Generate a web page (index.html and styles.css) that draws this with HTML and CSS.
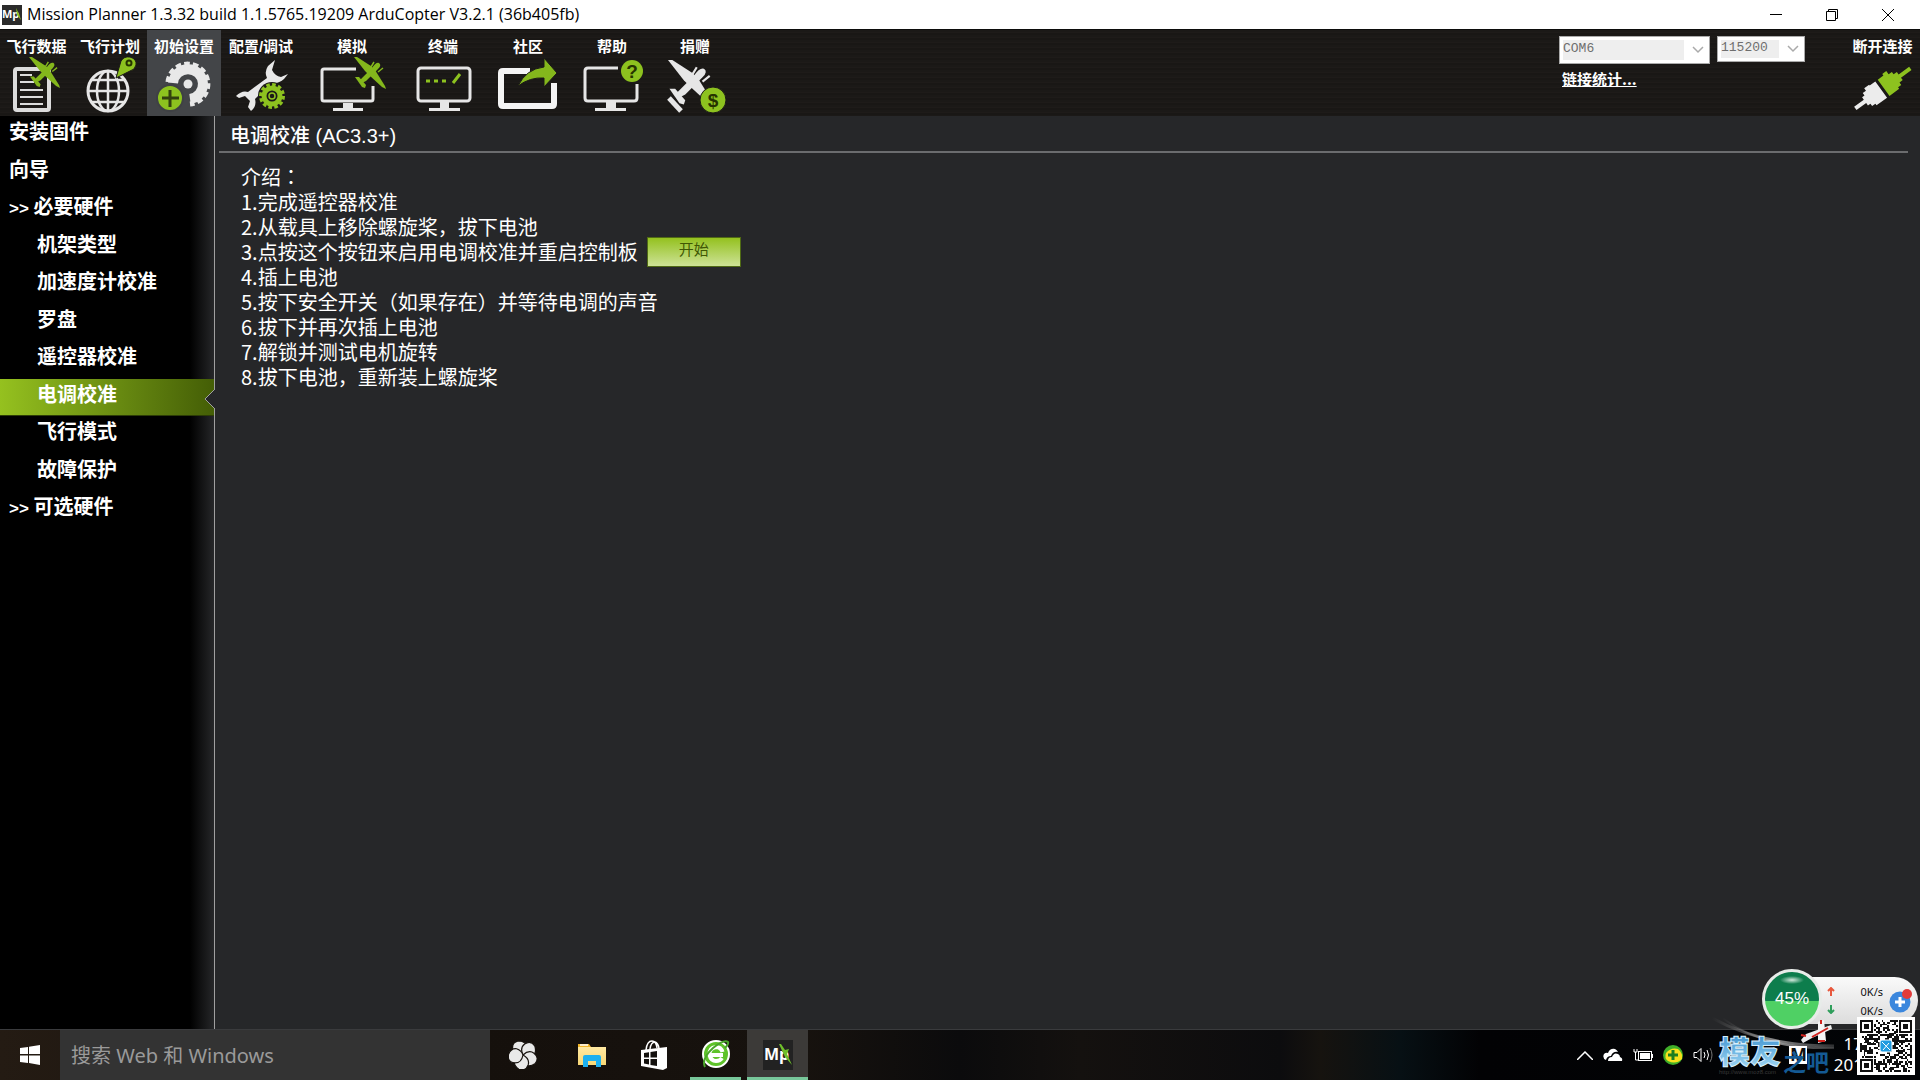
FILE: index.html
```html
<!DOCTYPE html>
<html lang="zh-CN">
<head>
<meta charset="utf-8">
<title>Mission Planner</title>
<link rel="stylesheet" href="styles.css">
</head>
<body>
<svg class="defs" width="0" height="0" aria-hidden="true">
  <defs>
    <symbol id="plane" viewBox="0 0 32 32" overflow="visible">
      <path d="M0 0L3 0L17 9L21 13L31 29L32 32L28 30L15 18L11 14Z"/>
      <path d="M25 6Q28 8 24 12L12 24L8 26L6 23L18 11Q22 5 25 6Z"/>
      <path d="M1 20L5 20L12 28L11 31L8 30Z"/>
      <path d="M17 10L20 5M24 15L29 11" fill="none" stroke="currentColor" stroke-width="1.500"/>
    </symbol>
    <linearGradient id="ink" x1="0" y1="0" x2="0" y2="1"><stop offset="0" stop-color="#2b86c8"/><stop offset="1" stop-color="#a9ddf7"/></linearGradient>
    <linearGradient id="folder" x1="0" y1="0" x2="0" y2="1"><stop offset="0" stop-color="#ffe9a2"/><stop offset="1" stop-color="#f8d775"/></linearGradient>
    <linearGradient id="swoosh"><stop offset="0" stop-color="#888" stop-opacity="0"/><stop offset=".5" stop-color="#aaa" stop-opacity=".8"/><stop offset="1" stop-color="#999" stop-opacity=".3"/></linearGradient>
  </defs>
</svg>

<header class="titlebar">
  <svg class="app-icon" width="20" height="20" viewBox="0 0 20 20"><rect width="20" height="20" fill="#2b2b2b"/><text x="0" y="13" font-size="11" font-weight="bold" fill="#fff">Mp</text><path d="M14 3L17 9L19 15L15 10Z" fill="#8dc21f"/></svg>
  <h1>Mission Planner 1.3.32 build 1.1.5765.19209 ArduCopter V3.2.1 (36b405fb)</h1>
  <div class="window-controls">
    <button aria-label="最小化"><svg width="12" height="12"><path d="M0 5.500H12" stroke="#000"/></svg></button>
    <button aria-label="还原"><svg width="12" height="12" fill="none" stroke="#000"><path d="M.5 2.500H9.500V11.500H.5ZM2.500 2V.5H11.500V9.500H10"/></svg></button>
    <button aria-label="关闭"><svg width="12" height="12"><path d="M0 0L12 12M12 0L0 12" stroke="#000"/></svg></button>
  </div>
</header>

<div class="toolbar">
  <nav class="modes">
    <button><span>飞行数据</span>
      <svg viewBox="0 57 73 59" height="59"><rect x="15" y="69" width="34" height="41" rx="2" fill="none" stroke="#dcdcdc" stroke-width="4"/><path d="M20 75H32M20 82H34M20 90H43M20 97H43M20 104H43" stroke="#dcdcdc" stroke-width="2"/><use href="#plane" x="29" y="57" width="31" height="31" class="leaf"/></svg></button>
    <button><span>飞行计划</span>
      <svg viewBox="73 57 74 59" height="59"><g fill="none" stroke="#e6e6e6" stroke-width="2.500"><circle cx="108" cy="91" r="20" stroke-width="3"/><ellipse cx="108" cy="91" rx="11" ry="20"/><path d="M108 71V111M88 91H128M92 80H124M92 102H124"/></g><path d="M116 78L121 61Q124 56 130 57Q137 59 136 65Q135 70 130 71Z" fill="#8dc21f" stroke="#1b1917"/><circle cx="129" cy="63" r="2.500" fill="#8dc21f" stroke="#263300" stroke-width="2"/></svg></button>
    <button class="selected"><span>初始设置</span>
      <svg viewBox="147 57 74 59" height="59"><g fill="none" stroke="#e8e8e8"><path d="M173 83A15 15 0 1 1 190 99" stroke-width="10"/><path d="M168 82A20 20 0 1 1 190 104" stroke-width="5" stroke-dasharray="5.500 3"/></g><circle cx="188" cy="84" r="4.500" fill="#e8e8e8"/><circle cx="170" cy="98" r="13" fill="#8dc21f" stroke="#3f4144" stroke-width="2"/><path d="M162 98H179M170 90V107" stroke="#33400f" stroke-width="3"/></svg></button>
    <button><span>配置/调试</span>
      <svg viewBox="221 57 80 59" height="59"><path d="M275 60L268 66Q264 72 267 78L248 92Q242 90 236 96L239 98L245 96L250 101L248 107L251 111Q257 106 255 99L271 83Q279 84 284 79L288 74L281 77Q275 76 272 70Z" fill="#e8e8e8"/><circle cx="272" cy="96" r="14" fill="#1b1917"/><circle cx="272" cy="96" r="8" fill="none" stroke="#8dc21f" stroke-width="5"/><circle cx="272" cy="96" r="11.500" fill="none" stroke="#8dc21f" stroke-width="3" stroke-dasharray="3.600 2.400"/><circle cx="272" cy="96" r="3" fill="none" stroke="#8dc21f" stroke-width="1.500"/></svg></button>
    <button><span>模拟</span>
      <svg viewBox="301 57 102 59" height="59"><path d="M356 69H324Q322 69 322 71V99Q322 101 324 101H371Q373 101 373 99V86" fill="none" stroke="#e6e6e6" stroke-width="3"/><path d="M343 103H353V108H363V111H333V108H343Z" fill="#e6e6e6"/><use href="#plane" x="354" y="57" width="32" height="32" class="leaf"/></svg></button>
    <button><span>终端</span>
      <svg viewBox="403 57 80 59" height="59"><rect x="418" y="68" width="52" height="33" rx="3" fill="none" stroke="#e6e6e6" stroke-width="3"/><path d="M440 102H449V108H460V111H429V108H440Z" fill="#e6e6e6"/><path d="M426 81H430M434 81H438M442 81H446M453 83L460 74" stroke="#8dc21f" stroke-width="3"/></svg></button>
    <button><span>社区</span>
      <svg viewBox="483 57 90 59" height="59"><path d="M530 71H503Q501 71 501 73V104Q501 106 503 106H552Q554 106 554 104V83" fill="none" stroke="#f4f4f4" stroke-width="6"/><path d="M518 86Q526 69 544 67V58L557 73L544 87V78Q530 77 518 86Z" fill="#84b71c" stroke="#1b1917"/></svg></button>
    <button><span>帮助</span>
      <svg viewBox="573 57 78 59" height="59"><path d="M618 68H588Q585 68 585 71V98Q585 101 588 101H634Q637 101 637 98V84" fill="none" stroke="#e6e6e6" stroke-width="3"/><path d="M606 102H616V108H626V111H595V108H606Z" fill="#e6e6e6"/><circle cx="632" cy="71" r="11" fill="#8dc21f"/><text x="632" y="78" class="glyph">?</text></svg></button>
    <button><span>捐赠</span>
      <svg viewBox="651 57 88 59" height="59"><use href="#plane" x="668" y="60" width="46" height="46" class="chalk"/><path d="M669 98L681 111" stroke="#e6e6e6" stroke-width="5"/><circle cx="713" cy="100" r="13" fill="#8dc21f" stroke="#1b1917"/><text x="713" y="107" class="glyph">$</text></svg></button>
  </nav>
  <div class="connection">
    <div class="combos">
      <select class="port" aria-label="端口"><option>COM6</option></select>
      <select class="baud" aria-label="波特率"><option>115200</option></select>
    </div>
    <a href="#stats">链接统计...</a>
  </div>
  <button class="disconnect"><span>断开连接</span>
    <svg viewBox="1845 57 75 59" height="59"><g transform="translate(1882 89) rotate(-36)"><path d="M2 -10H9V-12H14V-8H18V-5H22V-2H35V2H22V5H18V8H14V10H2Z" fill="#8dc21f"/><path d="M-1 -10H-8V-11H-14V-8H-18V-5H-21V-2H-33V2H-21V5H-18V8H-14V10H-1Z" fill="#ececec"/></g></svg></button>
</div>

<div class="workspace">
  <nav class="sidebar">
    <ul>
      <li><a href="#firmware">安装固件</a></li>
      <li><a href="#wizard">向导</a></li>
      <li><a href="#required"><span class="chevrons">&gt;&gt;</span> 必要硬件</a></li>
      <li class="child"><a href="#frame">机架类型</a></li>
      <li class="child"><a href="#accel">加速度计校准</a></li>
      <li class="child"><a href="#compass">罗盘</a></li>
      <li class="child"><a href="#radio">遥控器校准</a></li>
      <li class="child current"><a href="#esc" aria-current="page">电调校准</a><svg class="notch" width="11" height="20" viewBox="0 0 11 20"><path d="M11 0L1 10L11 20" fill="#262729" stroke="#a0a0a0"/></svg></li>
      <li class="child"><a href="#modes">飞行模式</a></li>
      <li class="child"><a href="#failsafe">故障保护</a></li>
      <li><a href="#optional"><span class="chevrons">&gt;&gt;</span> 可选硬件</a></li>
    </ul>
  </nav>
  <main>
    <h2>电调校准 (AC3.3+)</h2>
    <div class="steps">
      <p>介绍<span class="centered-colon" lang="zh-TW">：</span></p>
      <p>1.完成遥控器校准</p>
      <p>2.从载具上移除螺旋桨，拔下电池</p>
      <div class="step-action"><p>3.点按这个按钮来启用电调校准并重启控制板</p><button>开始</button></div>
      <p>4.插上电池</p>
      <p>5.按下安全开关（如果存在）并等待电调的声音</p>
      <p>6.拔下并再次插上电池</p>
      <p>7.解锁并测试电机旋转</p>
      <p>8.拔下电池，重新装上螺旋桨</p>
    </div>
  </main>
</div>

<footer class="taskbar">
  <button class="start" aria-label="开始菜单"><svg width="20" height="20" fill="#fff"><path d="M0 3L8 2V9H0ZM9 1.800L20 0V9H9ZM0 10.500H8V18L0 17ZM9 10.500H20V20L9 18Z"/></svg></button>
  <input class="search" type="text" placeholder="搜索 Web 和 Windows" aria-label="搜索">
  <div class="apps">
    <button aria-label="浏览器"><svg width="28" height="28" viewBox="-14 -14 28 28"><circle r="12" fill="#e9e9e9"/><g fill="#e9e9e9" stroke="#17120e" stroke-width="1.200"><path id="petal" d="M0 0Q-8 1 -10 -5Q-12 -12 -5 -14Q3 -14 4 -8Q4 -3 0 0Z"/><use href="#petal" transform="rotate(72)"/><use href="#petal" transform="rotate(144)"/><use href="#petal" transform="rotate(216)"/><use href="#petal" transform="rotate(288)"/></g></svg></button>
    <button aria-label="文件资源管理器"><svg width="28" height="24"><path d="M0 1H11L13 4H27V22H0Z" fill="#f0b52a"/><path d="M0 4H28V22H0Z" fill="url(#folder)"/><path d="M2 2H10" stroke="#fff" stroke-width="1.500"/><path d="M5 24V14Q5 12 7 12H21Q23 12 23 14V24H18V18H10V24Z" fill="#1cb0f0"/></svg></button>
    <button aria-label="应用商店"><svg width="28" height="30"><path d="M6 10Q7 1 12 1Q16 1 17 8M10 9Q11 2 15 2Q18 3 19 8" fill="none" stroke="#fff" stroke-width="1.500"/><path d="M1 10L27 7V28L23 30L1 26Z" fill="#fff"/><path d="M4 13L9 12.300V17.500H4ZM10.500 12L17 11V17.500H10.500ZM4 19H9V24.500L4 23.500ZM10.500 19H17V26L10.500 25Z" fill="#14110e"/></svg></button>
    <button class="running" aria-label="安全浏览器"><svg width="28" height="30"><circle cx="14" cy="14" r="13" fill="#5fc32a" stroke="#fff" stroke-width="2"/><path d="M21 15H8M20.500 12Q19 7 14 7Q7 8 7.500 15Q9 21 14 21Q18 21 20 18" fill="none" stroke="#fff" stroke-width="4"/><path d="M3 27Q-1 19 11 8Q22 -1 26 2Q27 4 23 8" fill="none" stroke="#4aa62a" stroke-width="2"/></svg></button>
    <button class="running active" aria-label="Mission Planner"><svg width="30" height="30"><rect width="30" height="30" fill="#222"/><text x="1" y="20" font-size="16" font-weight="bold" fill="#fff">Mp</text><path d="M16 4L18 4L22 10L26 9L24 14L29 25L22 17Z" fill="#6fbf2b"/></svg></button>
  </div>
  <div class="tray">
    <svg width="16" height="9" fill="none" stroke="#fff" stroke-width="1.500"><path d="M0 9L8 1L16 9"/></svg>
    <svg width="20" height="14" fill="#fff"><path d="M3 12Q-1 10 1 6Q3 4 5 5Q7 0 12 1Q14 2 15 4Q10 3 8 8Q4 8 3 12Z"/><path d="M5 13Q5 9 9 9Q11 4 15 6Q17 7 17 9Q20 10 19 13Z"/></svg>
    <svg width="20" height="14" fill="none" stroke="#fff"><rect x="5.500" y="3.500" width="13" height="9"/><rect x="7" y="5" width="10" height="6" fill="#fff" stroke="none"/><path d="M19.500 6V10M1 1V4H4V1M2.500 4V12H5"/></svg>
    <svg width="20" height="20"><circle cx="10" cy="10" r="10" fill="#3fae29"/><path d="M3 8Q8 2 15 4Q20 8 19 14Q13 20 5 16Q1 13 3 8Z" fill="#f6e01c"/><path d="M10 5V15M5 10H15" stroke="#1c7d21" stroke-width="3"/></svg>
    <svg width="20" height="16" fill="none" stroke="#fff"><path d="M1 5.500H4L8 1.500V14.500L4 10.500H1Z"/><path d="M11 5Q13 8 11 11M14 3Q17 8 14 13"/><path d="M17 1Q21 8 17 15" stroke="#777"/></svg>
  </div>
  <div class="clock"><span>17</span><span>201</span></div>
</footer>

<aside class="speed">
  <div class="pill">
    <svg width="8" height="27" fill="none" stroke-width="2"><path d="M4 9V2M1 4L4 1L7 4" stroke="#e8573c"/><path d="M4 18V25M1 23L4 26L7 23" stroke="#2f9e5b"/></svg>
    <div class="rates"><span>0K/s</span><span>0K/s</span></div>
    <svg width="23" height="24"><circle cx="11" cy="13" r="10.500" fill="#3b87dd"/><path d="M6 13H16M11 8V18" stroke="#fff" stroke-width="3"/><circle cx="18" cy="5" r="5" fill="#e23b3b"/></svg>
  </div>
  <div class="gauge">45%</div>
</aside>

<svg class="watermark" width="220" height="70" viewBox="1700 1010 220 70">
  <g fill="none" stroke="url(#swoosh)"><path d="M1712 1018Q1762 1046 1834 1046" stroke-width="3"/><path d="M1722 1018Q1765 1050 1834 1048" stroke-width="2"/></g>
  <rect x="1789" y="1046" width="18" height="18" fill="#fff"/><text x="1790" y="1061" font-size="18" font-weight="bold" fill="#111">M</text>
  <text x="1719" y="1063" class="brand">模友</text>
  <text x="1783" y="1071" class="brand-tail">之吧</text>
  <text x="1719" y="1074" class="brand-url">http://www.moz8.com</text>
  <path d="M1801 1040L1806 1034L1831 1025L1832 1029L1812 1038L1803 1043Z" fill="#eee"/><path d="M1818 1022L1824 1020L1826 1041L1818 1043Z" fill="#f4f4f4"/><path d="M1801 1035L1806 1036M1812 1037L1828 1028M1821 1020V1024M1818 1041H1825" stroke="#d2231e" stroke-width="2"/>
  <rect x="1857" y="1017" width="58" height="58" fill="#fff"/>
  <path id="qr" fill="#111" shape-rendering="crispEdges"/>
  <rect x="1880" y="1040" width="12" height="12" rx="2" fill="#1f9be0" stroke="#fff"/><path d="M1882 1042L1890 1050M1883 1050L1889 1043" stroke="#fff"/>
</svg>
<script src="qr.js"></script>
</body>
</html>
```
FILE: styles.css
```css
* { box-sizing: border-box; }
body {
  margin: 0;
  min-height: 100vh;
  display: flex;
  flex-direction: column;
  position: relative;
  background: #262729;
  color: #fff;
  font-family: "Open Sans", "Noto Sans CJK SC", sans-serif;
}
button { border: 0; padding: 0; margin: 0; background: none; color: inherit; font: inherit; }
h1, h2, p, ul { margin: 0; padding: 0; font-weight: normal; }
a { color: inherit; text-decoration: none; }
svg { display: block; }
.defs { position: absolute; }

.titlebar { display: flex; align-items: center; height: 29px; padding-left: 2px; background: #fff; color: #000; }
.titlebar h1 { margin-left: 5px; padding-bottom: 2px; font-family: "Open Sans", sans-serif; font-size: 16px; line-height: 26px; }
.window-controls { display: flex; margin: 0 4px 0 auto; }
.window-controls button { display: grid; place-items: center; width: 56px; height: 28px; }

.toolbar {
  display: flex;
  height: 87px;
  border-top: 1px solid #0c0c0b;
  background: repeating-linear-gradient(#1b1917 0 2px, #1e1b19 2px 3px, #191715 3px 5px);
}
.modes { display: grid; grid-template-columns: 73px 74px 74px 80px 102px 80px 90px 78px 88px; }
.modes button, .disconnect {
  display: flex;
  flex-direction: column;
  padding-top: 7px;
  font: bold 15px/20px "Liberation Sans", "Noto Sans CJK SC", sans-serif;
  text-align: center;
}
.modes span, .disconnect span { align-self: center; }
.modes .selected { background: #434548; }
.leaf { fill: #84b71c; color: #84b71c; }
.chalk { fill: #e6e6e6; color: #e6e6e6; }
.glyph { font: bold 19px "Liberation Sans", sans-serif; fill: #263300; text-anchor: middle; }

.connection { margin-left: auto; padding-top: 6px; margin-right: 40px; }
.combos { display: flex; align-items: flex-start; gap: 7px; }
.combos select {
  appearance: none;
  border: 1px solid #aaa;
  border-radius: 0;
  padding: 0 3px 3px;
  background: url("data:image/svg+xml,%3Csvg xmlns='http://www.w3.org/2000/svg' width='12' height='8'%3E%3Cpath d='M1 1L6 6L11 1' fill='none' stroke='%23aaa' stroke-width='1.500'/%3E%3C/svg%3E") no-repeat right 5px center, linear-gradient(#eee, #eee) no-repeat 3px 3px / calc(100% - 28px) calc(100% - 6px), #fff;
  color: #6e6e6e;
  font: 13px "Liberation Mono", monospace;
}
.combos .port { width: 151px; height: 28px; }
.combos .baud { width: 88px; height: 26px; }
.connection a {
  display: inline-block;
  margin: 4px 0 0 3px;
  font: bold 15px/22px "Noto Sans CJK SC", sans-serif;
  text-decoration: underline;
}
.disconnect { width: 75px; }

.workspace { display: flex; flex: 1; border-bottom: 1px solid #3a3b3d; }
.sidebar { width: 215px; border-right: 1px solid #a0a0a0; background: linear-gradient(90deg, #000 190px, #262729); }
.sidebar ul { display: grid; grid-auto-rows: 1fr; height: 413px; list-style: none; }
.sidebar li { position: relative; padding: 0 0 0 9px; font: bold 20px/30px "Noto Sans CJK SC", sans-serif; }
.sidebar .child { padding-left: 37px; }
.sidebar a { display: block; }
.chevrons { font: bold 17px "Liberation Sans", sans-serif; }
.sidebar .current { background: linear-gradient(90deg, #95c11f, #445e06); border-bottom: 1px solid #2d3d06; }
.notch { position: absolute; right: -1px; top: 10px; }

main { flex: 1; padding: 0 12px 0 4px; }
main h2 {
  padding: 5px 0 0 11px;
  height: 37px;
  border-bottom: 2px solid #6b6c6e;
  font: 500 20px/30px "Liberation Sans", "Noto Sans CJK SC", sans-serif;
}
.steps { padding: 11px 0 0 22px; font: 500 20px/25px "Noto Sans CJK SC", sans-serif; }
.centered-colon { font-family: "Noto Sans CJK TC", sans-serif; }
.step-action { display: flex; height: 25px; gap: 9px; }
.step-action button {
  width: 94px;
  height: 30px;
  margin-top: -2px;
  padding-bottom: 6px;
  border: 1px solid #4f6a14;
  background: linear-gradient(#94c11f, #cde296);
  color: #405704;
  font: 15px/22px "Noto Sans CJK SC", sans-serif;
}

.taskbar {
  display: flex;
  height: 50px;
  background: linear-gradient(90deg, #241b13, #15100c 480px, #17120e 800px, #0b0b0c 960px, #14110f 1080px, #0c0c0e 1280px, #16130f 1320px, #071014 1400px, #020204 1480px, #020406);
}
.start { display: grid; place-items: center; width: 60px; }
.search { width: 430px; padding: 0 11px; border: 0; background: #333; color: #fff; font: 20px "Noto Sans", "Noto Sans CJK SC", sans-serif; }
.search::placeholder { color: #9a9a9a; opacity: 1; }
.apps { display: flex; padding-left: 2px; }
.apps button { display: grid; place-items: center; width: 61px; margin-right: 1px; border-bottom: 3px solid transparent; border-top: 3px solid transparent; }
.apps button:first-child { margin-right: 8px; }
.apps .running { background: linear-gradient(#78c79a, #78c79a) no-repeat center bottom / 51px 3px border-box; }
.apps .active { background: linear-gradient(#78c79a, #78c79a) no-repeat center bottom / 100% 3px border-box, #3c3a38 border-box; }
.tray { display: flex; align-items: center; gap: 10px; margin-left: auto; }
.clock { display: flex; flex-direction: column; align-items: flex-end; width: 207px; padding: 3px 57px 0 0; font: 17px/21px "Noto Sans", sans-serif; }

.speed { position: absolute; right: 2px; bottom: 49px; width: 156px; height: 62px; }
.pill {
  display: flex;
  align-items: center;
  gap: 6px;
  height: 47px;
  margin: 8px 0 0 30px;
  padding: 0 6px 0 35px;
  border-radius: 0 24px 24px 0;
  background: linear-gradient(#fafafa, #dcdcdc);
  color: #111;
  font: 11px/19px "Noto Sans", sans-serif;
}
.rates { display: flex; flex-direction: column; align-items: flex-end; flex: 1; }
.gauge {
  position: absolute;
  left: 0;
  top: 0;
  width: 60px;
  height: 60px;
  border: 3px solid #e8ece9;
  border-radius: 50%;
  background: radial-gradient(ellipse 12px 4px at 50% 8px, #d5eadf, transparent), linear-gradient(#0d7d4c 54%, #4fd064 54%);
  font: 17px/54px "Liberation Sans", sans-serif;
  text-align: center;
}
.watermark { position: absolute; right: 0; bottom: 0; }
.brand { font: 900 31px "Noto Sans CJK SC", sans-serif; fill: url(#ink); stroke: #d8effb; stroke-width: 1; }
.brand-tail { font: bold 23px "Noto Sans CJK SC", sans-serif; fill: #145a94; }
.brand-url { font: 6px "Liberation Sans", sans-serif; fill: #3a3a3a; }
```
FILE: qr.js
```js
// Builds the 29 x 29 module code path: three finder squares and a seeded data field.
const size = 29, step = 52 / size, left = 1860, top_ = 1020;
let seed = 7, d = "";
function finder(x, y) {
  const fx = x > 20 ? x - 22 : x, fy = y > 20 ? y - 22 : y;
  if ((x > 20 && y > 20) || fx > 7 || fy > 7 || fx < -1 || fy < -1) return null;
  if (fx < 0 || fy < 0 || fx === 7 || fy === 7) return false;
  const ring = Math.max(Math.abs(fx - 3), Math.abs(fy - 3));
  return ring !== 2;
}
for (let y = 0; y < size; y++) {
  for (let x = 0; x < size; x++) {
    seed = (seed * 1103515245 + 12345) % 2147483648;
    const f = finder(x, y);
    if (f === null ? seed / 2147483648 > 0.5 : f) {
      d += `M${left + x * step} ${top_ + y * step}h${step}v${step}h-${step}z`;
    }
  }
}
document.getElementById("qr").setAttribute("d", d);
```
